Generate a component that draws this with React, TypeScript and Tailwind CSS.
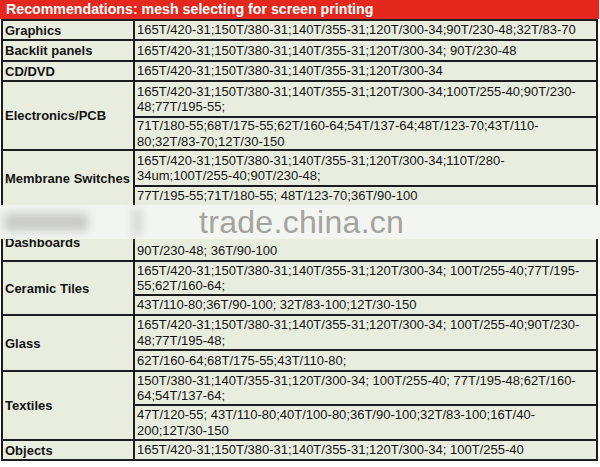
// Mesh recommendation table for screen printing (with marketplace watermark band)
import { Fragment } from 'react';

type Entry = {
  label: string;
  subs: string[][];
  labelClass?: string;
  subClass?: string;
};

const entries: Entry[] = [
  { label: 'Graphics', subs: [['165T/420-31;150T/380-31;140T/355-31;120T/300-34;90T/230-48;32T/83-70']] },
  { label: 'Backlit panels', subs: [['165T/420-31;150T/380-31;140T/355-31;120T/300-34; 90T/230-48']] },
  { label: 'CD/DVD', subs: [['165T/420-31;150T/380-31;140T/355-31;120T/300-34']] },
  {
    label: 'Electronics/PCB',
    subs: [
      ['165T/420-31;150T/380-31;140T/355-31;120T/300-34;100T/255-40;90T/230-', '48;77T/195-55;'],
      ['71T/180-55;68T/175-55;62T/160-64;54T/137-64;48T/123-70;43T/110-', '80;32T/83-70;12T/30-150'],
    ],
  },
  {
    label: 'Membrane Switches',
    subs: [
      ['165T/420-31;150T/380-31;140T/355-31;120T/300-34;110T/280-', '34um;100T/255-40;90T/230-48;'],
      ['77T/195-55;71T/180-55; 48T/123-70;36T/90-100'],
    ],
  },
  {
    // upper lines of this row are hidden under the watermark band
    label: 'Dashboards',
    labelClass: 'justify-end pb-[10px]',
    subClass: 'justify-end pb-[2px]',
    subs: [['90T/230-48; 36T/90-100']],
  },
  {
    label: 'Ceramic Tiles',
    subs: [
      ['165T/420-31;150T/380-31;140T/355-31;120T/300-34; 100T/255-40;77T/195-', '55;62T/160-64;'],
      ['43T/110-80;36T/90-100; 32T/83-100;12T/30-150'],
    ],
  },
  {
    label: 'Glass',
    subs: [
      ['165T/420-31;150T/380-31;140T/355-31;120T/300-34; 100T/255-40;90T/230-', '48;77T/195-48;'],
      ['62T/160-64;68T/175-55;43T/110-80;'],
    ],
  },
  {
    label: 'Textiles',
    subs: [
      ['150T/380-31;140T/355-31;120T/300-34; 100T/255-40; 77T/195-48;62T/160-', '64;54T/137-64;'],
      ['47T/120-55; 43T/110-80;40T/100-80;36T/90-100;32T/83-100;16T/40-', '200;12T/30-150'],
    ],
  },
  { label: 'Objects', subs: [['165T/420-31;150T/380-31;140T/355-31;120T/300-34; 100T/255-40']] },
];

export default function App() {
  return (
    <div
      className="relative w-[600px] h-[467px] bg-white overflow-hidden text-[#141414]"
      style={{ fontFamily: '"Liberation Sans", Arial, sans-serif' }}
    >
      {/* Title bar */}
      <div className="h-[19px] w-[599px] bg-[#e4281d] flex items-center pl-[6px]">
        <span className="text-white font-bold text-[14.2px] leading-none">
          Recommendations: mesh selecting for screen printing
        </span>
      </div>

      {/* Table */}
      <div className="ml-[1px] w-[597px] grid grid-cols-[130px_461px] grid-rows-[18px_19px_18px_34px_31px_34px_18px_53px_32px_18px_33px_19px_32px_33px_18px] gap-[2px] p-[2px] bg-[#1c1c1c]">
        {entries.map((e) => (
          <Fragment key={e.label}>
            <div
              className={`bg-[#e8eddf] flex flex-col pl-[2px] font-bold text-[13px] leading-[15px] whitespace-nowrap ${
                e.subs.length === 2 ? 'row-span-2' : ''
              } ${e.labelClass ?? 'justify-center'}`}
            >
              {e.label}
            </div>
            {e.subs.map((lines, i) => (
              <div
                key={e.label + i}
                className={`bg-[#e8eddf] flex flex-col pl-[2px] text-[13px] leading-[15.5px] whitespace-nowrap ${
                  e.subClass ?? 'justify-center'
                }`}
              >
                {lines.map((l) => (
                  <span key={l}>{l}</span>
                ))}
              </div>
            ))}
          </Fragment>
        ))}
      </div>

      {/* Watermark band lying over the table */}
      <div className="absolute left-0 top-[205px] w-[600px] h-[34px] bg-[#f3f5f0] flex items-center">
        <div className="ml-[4px] w-[84px] h-[18px] bg-[#c9cac6] blur-[5px] rounded-sm" />
        <div className="ml-[44px] w-[10px] h-[26px] bg-[#d6d7d3] blur-[4px]" />
        <span className="ml-[57px] text-[32px] leading-[32px] text-[#a3a3a0] tracking-[0.3px]">
          trade.china.cn
        </span>
      </div>
    </div>
  );
}
